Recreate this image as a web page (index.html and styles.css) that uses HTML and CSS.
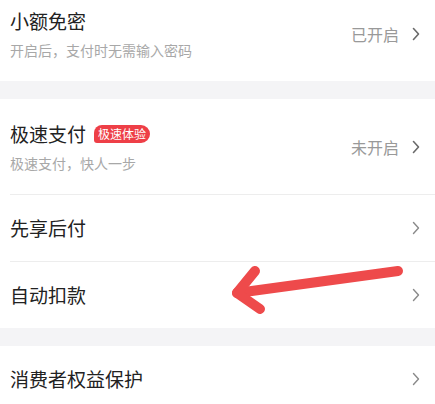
FILE: index.html
```html
<!DOCTYPE html>
<html lang="zh">
<head>
<meta charset="utf-8">
<link rel="stylesheet" href="styles.css">
</head>
<body>
<div class="page">
  <section class="group">
    <div class="row row-first">
      <div class="main">
        <div class="title">小额免密</div>
        <div class="sub">开启后，支付时无需输入密码</div>
      </div>
      <div class="side"><span class="status">已开启</span><svg class="chev dark" viewBox="0 0 8 14" width="8" height="14"><path d="M1.5 1.5 L6.5 7 L1.5 12.5" fill="none" stroke="currentColor" stroke-width="1.6" stroke-linecap="round" stroke-linejoin="round"/></svg></div>
    </div>
  </section>
  <section class="group">
    <div class="row row-tall">
      <div class="main">
        <div class="title">极速支付<span class="badge">极速体验</span></div>
        <div class="sub">极速支付，快人一步</div>
      </div>
      <div class="side"><span class="status">未开启</span><svg class="chev dark" viewBox="0 0 8 14" width="8" height="14"><path d="M1.5 1.5 L6.5 7 L1.5 12.5" fill="none" stroke="currentColor" stroke-width="1.6" stroke-linecap="round" stroke-linejoin="round"/></svg></div>
    </div>
    <div class="divider"></div>
    <div class="row">
      <div class="main"><div class="title">先享后付</div></div>
      <div class="side"><svg class="chev" viewBox="0 0 8 14" width="8" height="14"><path d="M1.5 1.5 L6.5 7 L1.5 12.5" fill="none" stroke="currentColor" stroke-width="1.4" stroke-linecap="round" stroke-linejoin="round"/></svg></div>
    </div>
    <div class="divider"></div>
    <div class="row">
      <div class="main"><div class="title">自动扣款</div></div>
      <div class="side"><svg class="chev" viewBox="0 0 8 14" width="8" height="14"><path d="M1.5 1.5 L6.5 7 L1.5 12.5" fill="none" stroke="currentColor" stroke-width="1.4" stroke-linecap="round" stroke-linejoin="round"/></svg></div>
    </div>
  </section>
  <section class="group">
    <div class="row">
      <div class="main"><div class="title">消费者权益保护</div></div>
      <div class="side"><svg class="chev" viewBox="0 0 8 14" width="8" height="14"><path d="M1.5 1.5 L6.5 7 L1.5 12.5" fill="none" stroke="currentColor" stroke-width="1.4" stroke-linecap="round" stroke-linejoin="round"/></svg></div>
    </div>
  </section>
  <svg class="arrow" viewBox="0 0 435 404" width="435" height="404">
    <g fill="none" stroke="#ee4a4b" stroke-width="10" stroke-linecap="round" stroke-linejoin="round">
      <path d="M398 271 L237 293"/>
      <path d="M255 271 L237 293 L260 309"/>
    </g>
  </svg>
</div>
</body>
</html>
```
FILE: styles.css
```css
html, body {
  margin: 0;
  padding: 0;
}
body {
  background: #f4f4f6;
  font-family: "Noto Sans CJK SC", "Noto Sans", sans-serif;
  width: 435px;
  height: 404px;
  overflow: hidden;
}
.page {
  position: relative;
  display: flex;
  flex-direction: column;
  gap: 18px;
}
.group {
  background: #ffffff;
  display: flex;
  flex-direction: column;
}
.row {
  display: flex;
  align-items: center;
  justify-content: space-between;
  height: 66px;
  padding: 0 15px 0 10px;
  box-sizing: border-box;
}
.row-first {
  height: 81px;
  padding-bottom: 13px;
}
.row-tall {
  height: 95px;
}
.main {
  display: flex;
  flex-direction: column;
  gap: 6px;
}
.title {
  font-size: 19px;
  line-height: 26px;
  color: #222222;
  display: flex;
  align-items: center;
}
.sub {
  font-size: 14px;
  line-height: 20px;
  color: #a8a8a8;
}
.badge {
  margin-left: 8px;
  background: #ee3f47;
  color: #ffffff;
  font-size: 12px;
  line-height: 18px;
  height: 18px;
  padding: 0 4px 0 4px;
  border-radius: 8px 9px 9px 3px;
}
.side {
  display: flex;
  align-items: center;
  gap: 13px;
}
.status {
  font-size: 16px;
  color: #999999;
}
.chev {
  color: #8a8a8a;
  display: block;
}
.chev.dark {
  color: #6a6a6a;
}
.divider {
  height: 1px;
  background: #ededed;
  margin-left: 10px;
}
.arrow {
  position: absolute;
  left: 0;
  top: 0;
  pointer-events: none;
}
```
